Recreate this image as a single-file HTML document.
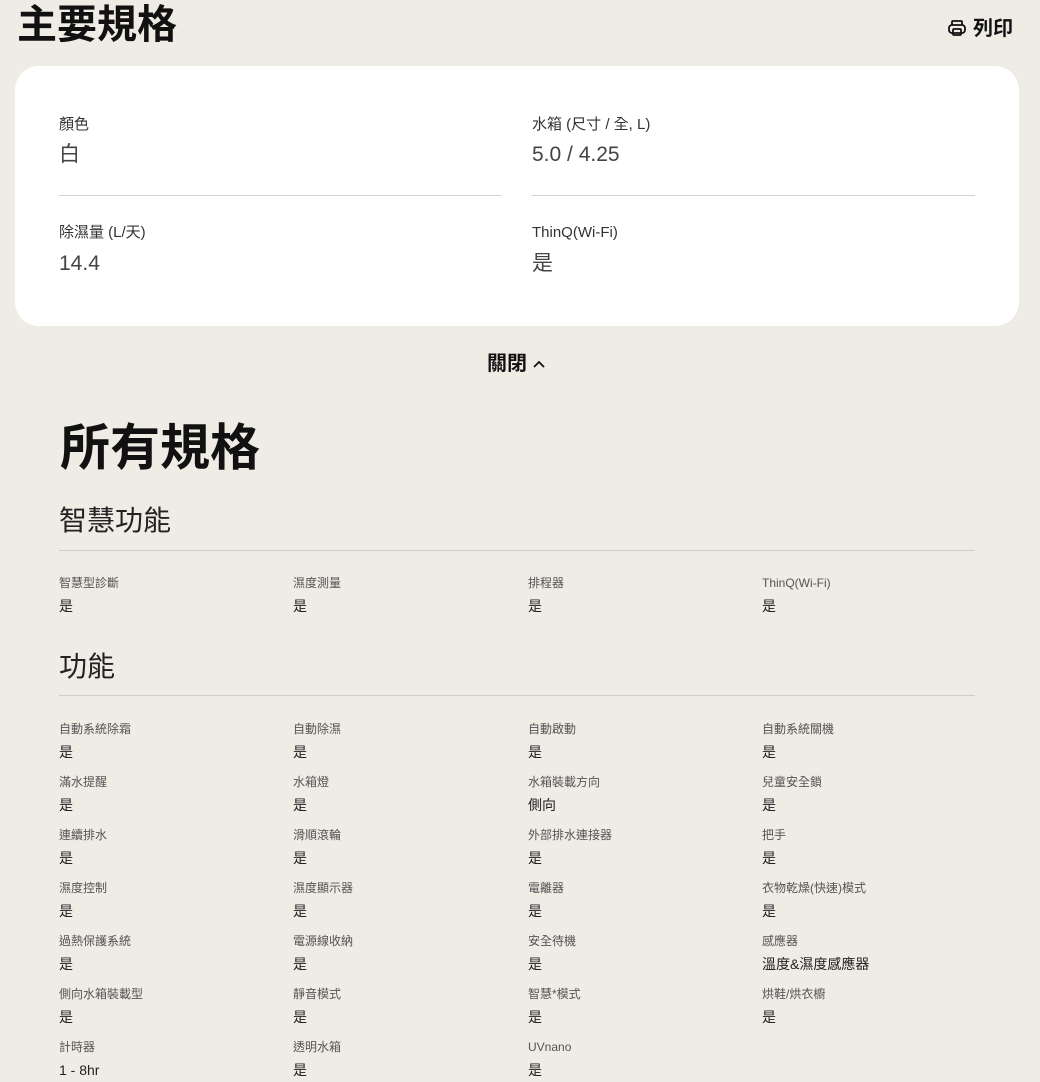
<!DOCTYPE html>
<html><head><meta charset="utf-8"><style>
*{margin:0;padding:0;box-sizing:border-box}
body{width:1040px;height:1082px;overflow:hidden;background:#efebe5;font-family:"Liberation Sans","Noto Sans CJK TC",sans-serif;color:#111;position:relative}
.a{position:absolute;white-space:nowrap;line-height:1}
.card{position:absolute;left:15px;top:66px;width:1004px;height:260px;background:#fff;border-radius:24px}
.lbl{font-size:15px;color:#333}
.val{font-size:21px;color:#444}
.ln{position:absolute;height:1px;background:#d4d2cf}
.sl{font-size:12px;color:#555}
.sv{font-size:14px;color:#222}
</style></head><body>
<div class="a" style="left:17px;top:5px;font-size:40px;font-weight:bold">主要規格</div>
<div class="a" style="left:947px;top:18px;font-size:20px;font-weight:bold">
<svg width="20" height="20" viewBox="0 0 20 20" style="vertical-align:-3px;margin-right:6px" fill="none" stroke="#111" stroke-width="1.8"><path d="M5 7V4a1 1 0 0 1 1-1h8a1 1 0 0 1 1 1v3"/><rect x="2" y="7" width="16" height="8" rx="3"/><rect x="6" y="11" width="8" height="6" rx="1"/></svg>列印</div>
<div class="card"></div>
<div class="a lbl" style="left:59px;top:117px">顏色</div>
<div class="a val" style="left:59px;top:144px">白</div>
<div class="a lbl" style="left:532px;top:117px">水箱 (尺寸 / 全, L)</div>
<div class="a val" style="left:532px;top:144px">5.0 / 4.25</div>
<div class="ln" style="left:59px;top:195px;width:443px"></div>
<div class="ln" style="left:532px;top:195px;width:443px"></div>
<div class="a lbl" style="left:59px;top:225px">除濕量 (L/天)</div>
<div class="a val" style="left:59px;top:253px">14.4</div>
<div class="a lbl" style="left:532px;top:225px">ThinQ(Wi-Fi)</div>
<div class="a val" style="left:532px;top:253px">是</div>
<div class="a" style="left:487px;top:354px;font-size:20px;font-weight:bold">關閉 <svg width="12" height="8" viewBox="0 0 12 8" style="vertical-align:2px" fill="none" stroke="#111" stroke-width="1.8"><path d="M1 7l5-5 5 5"/></svg></div>
<div class="a" style="left:60px;top:423px;font-size:50px;font-weight:bold">所有規格</div>
<div class="a" style="left:59px;top:507px;font-size:28px;color:#222">智慧功能</div>
<div class="ln" style="left:59px;top:550px;width:916px;background:#cfccc8"></div>
<div class="a" style="left:59px;top:653px;font-size:28px;color:#222">功能</div>
<div class="ln" style="left:59px;top:695px;width:916px;background:#cfccc8"></div>
<div id="g"></div>
<script>
var X=[59,293,528,762];
var rows=[[577,[["智慧型診斷","是"],["濕度測量","是"],["排程器","是"],["ThinQ(Wi-Fi)","是"]]],
[723,[["自動系統除霜","是"],["自動除濕","是"],["自動啟動","是"],["自動系統關機","是"]]],
[776,[["滿水提醒","是"],["水箱燈","是"],["水箱裝載方向","側向"],["兒童安全鎖","是"]]],
[829,[["連續排水","是"],["滑順滾輪","是"],["外部排水連接器","是"],["把手","是"]]],
[882,[["濕度控制","是"],["濕度顯示器","是"],["電離器","是"],["衣物乾燥(快速)模式","是"]]],
[935,[["過熱保護系統","是"],["電源線收納","是"],["安全待機","是"],["感應器","溫度&濕度感應器"]]],
[988,[["側向水箱裝載型","是"],["靜音模式","是"],["智慧*模式","是"],["烘鞋/烘衣櫥","是"]]],
[1041,[["計時器","1 - 8hr"],["透明水箱","是"],["UVnano","是"]]]];
var h="";rows.forEach(function(r){r[1].forEach(function(c,i){h+='<div class="a sl" style="left:'+X[i]+'px;top:'+r[0]+'px">'+c[0]+'</div><div class="a sv" style="left:'+X[i]+'px;top:'+(r[0]+22)+'px">'+c[1]+'</div>';});});
document.getElementById("g").innerHTML=h;
</script>
</body></html>
